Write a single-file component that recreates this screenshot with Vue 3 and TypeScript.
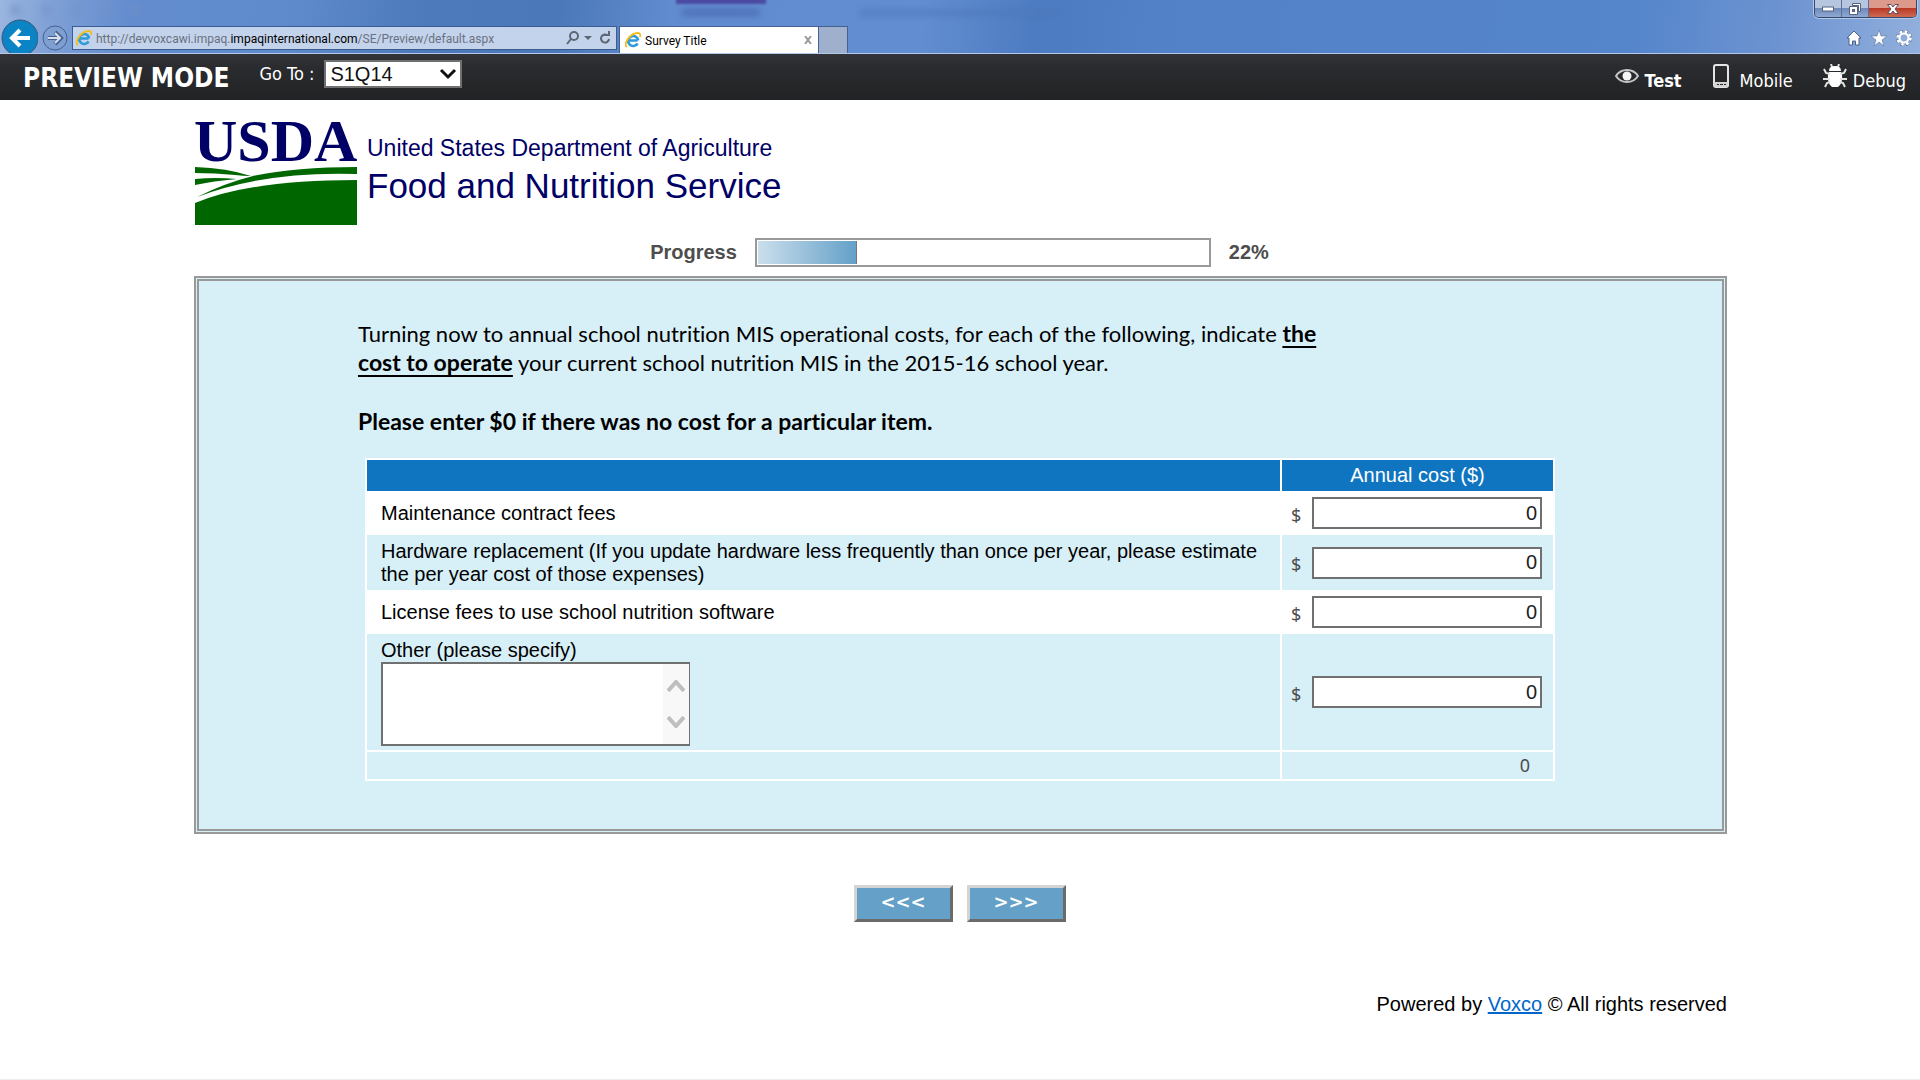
<script setup lang="ts">
import { reactive, ref, computed } from 'vue'

interface CostRow {
  id: string
  label: string
  value: string
  specify?: boolean
}

const rows = reactive<CostRow[]>([
  { id: 'maintenance', label: 'Maintenance contract fees', value: '0' },
  {
    id: 'hardware',
    label:
      'Hardware replacement (If you update hardware less frequently than once per year, please estimate the per year cost of those expenses)',
    value: '0',
  },
  { id: 'license', label: 'License fees to use school nutrition software', value: '0' },
  { id: 'other', label: 'Other (please specify)', value: '0', specify: true },
])

const otherText = ref('')
const question = ref('S1Q14')
const progress = ref(22)

const total = computed(() => rows.reduce((sum, row) => sum + (Number(row.value) || 0), 0))
</script>

<template>
  <div class="window">
    <header class="chrome">
      <div class="glass" aria-hidden="true">
        <i class="ghost ghost-block"></i>
        <i class="ghost ghost-caption"></i>
        <i class="ghost ghost-title"></i>
        <i class="ghost ghost-tools"></i>
      </div>
      <div class="window-buttons">
        <button type="button" class="win" aria-label="Minimize">
          <svg width="14" height="8" viewBox="0 0 14 8"><rect x="1.500" y="2" width="11" height="4" fill="#fff" stroke="#56637f" /></svg>
        </button>
        <button type="button" class="win" aria-label="Restore">
          <svg width="14" height="14" viewBox="0 0 14 14">
            <path d="M4.500 1.500h8v8h-2v-6h-6z" fill="#fff" stroke="#56637f" />
            <path d="M1.500 4.500h8v8h-8z" fill="#fff" stroke="#56637f" />
            <rect x="4.500" y="7.500" width="2" height="2" fill="#6d86b4" stroke="#56637f" />
          </svg>
        </button>
        <button type="button" class="win win-close" aria-label="Close">
          <svg width="14" height="12" viewBox="0 0 14 12">
            <path d="M1.500 1.500h3.500l2 2.500 2-2.500h3.500l-3.500 4.500 3.500 4.500h-3.500l-2-2.500-2 2.500h-3.500l3.500-4.500z" fill="#fff" stroke="#5f4d5c" />
          </svg>
        </button>
      </div>
      <div class="nav">
        <button type="button" class="nav-back" aria-label="Back">
          <svg width="38" height="36" viewBox="0 0 38 36">
            <circle cx="20" cy="19" r="18" fill="#0a84c4" stroke="#3c5578" />
            <path d="M30 19H13M20 11l-8 8 8 8" fill="none" stroke="#fff" stroke-width="4" />
          </svg>
        </button>
        <button type="button" class="nav-forward" aria-label="Forward">
          <svg width="26" height="26" viewBox="0 0 26 26">
            <circle cx="13" cy="13" r="12" fill="#7f9fd2" stroke="#46618f" />
            <path d="M6 13h13M13 7l6 6-6 6" fill="none" stroke="#46618f" stroke-width="4" />
            <path d="M6 13h12M13 8l5 5-5 5" fill="none" stroke="#d5dff0" stroke-width="2" />
          </svg>
        </button>
        <div class="address">
          <svg class="ie" width="16" height="16" viewBox="0 0 16 16">
            <path d="M12.500 8.500H4M12.600 11.500A5 5 0 1 1 13.200 8.500" fill="none" stroke="#2f9ad8" stroke-width="2.600" />
            <path d="M2 15C-2 12 5 1 13 1c2.500 0 2.500 2 2 4" fill="none" stroke="#f2bd1c" stroke-width="1.800" />
          </svg>
          <span class="url">http://devvoxcawi.impaq.<b>impaqinternational.com</b>/SE/Preview/default.aspx</span>
          <svg width="46" height="16" viewBox="0 0 46 16" fill="none" stroke="#5d6672">
            <circle cx="8" cy="6" r="4" stroke-width="2" />
            <path d="M5 9l-4 5" stroke-width="2" />
            <path d="M18 6h8l-4 4z" fill="#5d6672" stroke="none" />
            <path d="M41 5A4 4 0 1 0 43 9" stroke-width="2" />
            <path d="M38 5h5V1" stroke-width="2" />
          </svg>
        </div>
        <div class="tab">
          <svg class="ie" width="16" height="16" viewBox="0 0 16 16">
            <path d="M12.500 8.500H4M12.600 11.500A5 5 0 1 1 13.200 8.500" fill="none" stroke="#2f9ad8" stroke-width="2.600" />
            <path d="M2 15C-2 12 5 1 13 1c2.500 0 2.500 2 2 4" fill="none" stroke="#f2bd1c" stroke-width="1.800" />
          </svg>
          <span class="tab-title">Survey Title</span>
          <button type="button" class="tab-close" aria-label="Close tab">
            <svg width="8" height="8" viewBox="0 0 8 8"><path d="M1 0l6 8M7 0L1 8" stroke="#9a9a9a" stroke-width="2" /></svg>
          </button>
        </div>
        <button type="button" class="new-tab" aria-label="New tab"></button>
        <div class="tools">
          <svg width="16" height="16" viewBox="0 0 16 16">
            <path d="M8 1l7 7h-2v7H9.500v-4h-3v4H3V8H1z" fill="#fff" stroke="#4a6189" />
          </svg>
          <svg width="16" height="16" viewBox="0 0 16 16">
            <path d="M8 0l2 6h6l-5 4 2 6-5-4-5 4 2-6-5-4h6z" fill="#fff" stroke="#4a6189" stroke-width=".5" />
          </svg>
          <svg width="16" height="16" viewBox="0 0 16 16" fill="none">
            <circle cx="8" cy="8" r="6.500" stroke="#4a6189" stroke-width="3.400" stroke-dasharray="3.100 2" />
            <circle cx="8" cy="8" r="6.500" stroke="#fff" stroke-width="2.600" stroke-dasharray="2.600 2.500" />
            <circle cx="8" cy="8" r="4.500" stroke="#fff" stroke-width="2.200" />
          </svg>
        </div>
      </div>
    </header>

    <div class="preview-bar">
      <strong class="mode">PREVIEW MODE</strong>
      <label class="goto-label" for="goto">Go To :</label>
      <div class="select-wrap">
        <select id="goto" v-model="question" class="goto">
          <option>S1Q14</option>
        </select>
        <svg class="chevron" width="18" height="12" viewBox="0 0 18 12"><path d="M2 2l7 7 7-7" fill="none" stroke="#111" stroke-width="3" /></svg>
      </div>
      <div class="views">
        <button type="button" class="view view-active">
          <svg width="24" height="24" viewBox="0 0 24 24">
            <path d="M1 12C6 4 18 4 23 12C18 20 6 20 1 12z" fill="none" stroke="#c4c5c7" stroke-width="2" />
            <circle cx="12" cy="12" r="4.500" fill="#f4f4f4" />
          </svg>
          <span>Test</span>
        </button>
        <button type="button" class="view">
          <svg width="22" height="24" viewBox="-1 0 22 24">
            <rect x="1" y="1" width="14" height="22" rx="2" fill="none" stroke="#e4e4e4" stroke-width="2" />
            <path d="M1 18h14v3l-1 2H2l-1-2z" fill="#d4d4d4" />
            <path d="M4 20.500h2M7 20.500h3M11 20.500h2" stroke="#28292b" />
          </svg>
          <span>Mobile</span>
        </button>
        <button type="button" class="view">
          <svg width="24" height="24" viewBox="0 0 24 24" stroke="#e2e2e2">
            <path d="M8 0l1 3M16 0l-1 3" fill="none" stroke-width="2" />
            <path d="M6 7q0-5 6-5t6 5z" fill="#fff" stroke="none" />
            <path d="M6 8h12l1 3q1 8-4 12h-6q-5-4-4-12z" fill="#fff" stroke="none" />
            <path d="M1 5l2 4 4 1M0 15h7M2 23l2-4 3-1M23 5l-2 4-4 1M24 15h-7M22 23l-2-4-3-1" fill="none" stroke-width="2" />
          </svg>
          <span>Debug</span>
        </button>
      </div>
    </div>

    <main class="page">
      <div class="logo">
        <div class="logo-mark">
          <span class="usda">USDA</span>
          <svg class="fields" width="162" height="58" viewBox="0 0 162 58" fill="#060">
            <path d="M0 0Q32 1 56 9Q48 9 40 8Q20 6 0 6z" />
            <path d="M0 12Q20 10 42 12Q18 14 0 18z" />
            <path d="M2 30Q30 16 58 9Q100 0 162 0V7Q70 4 2 30z" />
            <path d="M0 36Q55 13 162 13V58H0z" />
          </svg>
        </div>
        <div class="logo-text">
          <span class="dept">United States Department of Agriculture</span>
          <span class="service">Food and Nutrition Service</span>
        </div>
      </div>

      <div class="progress">
        <span id="progress-label">Progress</span>
        <div class="bar" role="progressbar" aria-labelledby="progress-label" :aria-valuenow="progress">
          <div class="bar-fill" :style="{ width: progress + '%' }"></div>
        </div>
        <span>{{ progress }}%</span>
      </div>

      <form class="panel" @submit.prevent>
        <div class="intro">
          <p>
            Turning now to annual school nutrition MIS operational costs, for each of the following, indicate
            <b><u>the</u></b> <b><u>cost to operate</u></b> your current school nutrition MIS in the 2015-16 school year.
          </p>
          <p><b>Please enter $0 if there was no cost for a particular item.</b></p>
        </div>

        <table class="costs">
          <colgroup>
            <col />
            <col class="cost-col" />
          </colgroup>
          <thead>
            <tr>
              <th></th>
              <th scope="col">Annual cost ($)</th>
            </tr>
          </thead>
          <tbody>
            <tr v-for="row in rows" :key="row.id">
              <td class="item">
                <label :for="row.id">{{ row.label }}</label>
                <div v-if="row.specify" class="specify">
                  <textarea v-model="otherText" aria-label="Other (please specify)"></textarea>
                  <div class="scroll" aria-hidden="true">
                    <svg width="18" height="14" viewBox="0 0 18 14"><path d="M1 11l8-9 8 9" fill="none" stroke="#bfbfbf" stroke-width="4" /></svg>
                    <svg width="18" height="14" viewBox="0 0 18 14"><path d="M1 3l8 9 8-9" fill="none" stroke="#bfbfbf" stroke-width="4" /></svg>
                  </div>
                </div>
              </td>
              <td class="cost">
                <div class="money">
                  <span>$</span>
                  <input :id="row.id" v-model="row.value" type="text" />
                </div>
              </td>
            </tr>
          </tbody>
          <tfoot>
            <tr>
              <td></td>
              <td class="total">{{ total }}</td>
            </tr>
          </tfoot>
        </table>
      </form>

      <div class="pager">
        <button type="button">&lt;&lt;&lt;</button>
        <button type="button">&gt;&gt;&gt;</button>
      </div>

      <footer class="footer">Powered by <a href="#">Voxco</a> © All rights reserved</footer>
    </main>
  </div>
</template>

<style>
body {
  margin: 0;
  background: #fff;
}
</style>

<style scoped>
.window {
  box-sizing: border-box;
  min-height: 100vh;
  border-bottom: 1px solid #ececec;
  font-family: "Liberation Sans", Arial, sans-serif;
  font-size: 20px;
  line-height: 23px;
  color: #000;
}

button {
  font: inherit;
  color: inherit;
  background: none;
  border: 0;
  padding: 0;
}

svg {
  display: block;
  flex: none;
}

/* Browser frame */
.chrome {
  position: relative;
  box-sizing: border-box;
  height: 54px;
  padding-top: 18px;
  overflow: hidden;
  border-bottom: 1px solid #b4c8ea;
  background: linear-gradient(97deg, #9bb6df 0%, #7d9fd5 3%, #628cce 7%, #5f8bcd 15%, #4d7abb 22%, #4b78b9 29%, #618ccf 35%, #628dd0 48%, #4d7bc1 54%, #5381c8 60%, #5585cb 85%, #6e94d1 93%, #92b0dd 100%);
}

.glass {
  position: absolute;
  inset: 0;
}

.ghost {
  position: absolute;
  filter: blur(3px);
}

.ghost-block {
  left: 676px;
  top: -4px;
  width: 90px;
  height: 8px;
  background: #4d4aa4;
  filter: blur(1px);
}

.ghost-caption {
  left: 682px;
  top: 9px;
  width: 78px;
  height: 7px;
  background: #4f6fb9;
}

.ghost-title {
  left: 860px;
  top: 10px;
  width: 200px;
  height: 6px;
  background: #4b76b8;
  opacity: 0.6;
}

.ghost-tools {
  left: 10px;
  top: 4px;
  width: 130px;
  height: 12px;
  background: repeating-linear-gradient(90deg, #7590c8 0 12px, transparent 12px 30px);
  opacity: 0.5;
}

.window-buttons {
  position: absolute;
  top: 0;
  right: 3px;
  display: flex;
  box-sizing: border-box;
  height: 18px;
  border: 1px solid #34496f;
  border-top: 0;
  border-radius: 0 0 5px 5px;
  overflow: hidden;
  box-shadow: 0 0 0 1px #b7c8e6;
}

.win {
  display: flex;
  align-items: center;
  justify-content: center;
  width: 27px;
  background: linear-gradient(#b7c6df 45%, #6f8bbb 50%, #90a9d2);
  border-right: 1px solid #5a6f98;
}

.win-close {
  width: 47px;
  border-right: 0;
  background: linear-gradient(#dc9a8c 45%, #b93a26 50%, #cf6a50);
}

.nav {
  position: relative;
  display: flex;
  align-items: flex-start;
}

.nav-back {
  margin-top: 1px;
}

.nav-forward {
  margin: 7px 4px 0 4px;
}

.address {
  display: flex;
  align-items: center;
  gap: 4px;
  box-sizing: border-box;
  width: 545px;
  height: 24px;
  margin-top: 8px;
  padding: 0 4px 0 3px;
  border: 1px solid #3d5c94;
  background: #c4d3ec;
}

.url {
  flex: 1;
  padding-top: 2px;
  font: 12px/20px Roboto, sans-serif;
  color: #68717f;
  white-space: nowrap;
}

.url b {
  font-weight: 400;
  color: #000;
}

.tab {
  display: flex;
  align-items: center;
  gap: 4px;
  box-sizing: border-box;
  width: 200px;
  height: 27px;
  margin: 8px 0 0 2px;
  padding: 0 6px 0 5px;
  border: 1px solid #46618f;
  border-bottom: 0;
  background: #fff;
}

.tab-title {
  flex: 1;
  padding-top: 2px;
  font: 12px/24px Roboto, sans-serif;
}

.new-tab {
  box-sizing: border-box;
  width: 29px;
  height: 27px;
  margin-top: 8px;
  background: #9eb0cc;
  border: 1px solid #46618f;
  border-width: 1px 1px 0 0;
}

.tools {
  display: flex;
  gap: 9px;
  margin: 12px 8px 0 auto;
}

/* Preview toolbar */
.preview-bar {
  display: flex;
  align-items: flex-start;
  box-sizing: border-box;
  height: 46px;
  padding: 6px 14px 0 23px;
  background: linear-gradient(#323439, #2a2b2e 30%, #222325);
  color: #fff;
  font-family: "DejaVu Sans Condensed", "DejaVu Sans", sans-serif;
}

.mode {
  font-size: 26px;
  line-height: 36px;
}

.goto-label {
  margin: 2px 10px 0 30px;
  font-size: 18px;
  line-height: 24px;
}

.select-wrap {
  position: relative;
}

.goto {
  display: block;
  box-sizing: border-box;
  width: 138px;
  height: 28px;
  padding: 0 4px;
  border: 2px solid #707070;
  border-radius: 0;
  background: #fff;
  appearance: none;
  font: 20px/24px "Liberation Sans", sans-serif;
  color: #111;
}

.chevron {
  position: absolute;
  top: 8px;
  right: 5px;
  pointer-events: none;
}

.views {
  display: flex;
  gap: 30px;
  margin: 4px 0 0 auto;
}

.view {
  display: flex;
  gap: 6px;
  font-size: 18px;
  line-height: 34px;
}

.view-active {
  font-weight: 700;
}

/* Survey page */
.page {
  padding: 12px 193px 0 194px;
}

.logo {
  display: flex;
  gap: 10px;
}

.logo-mark {
  width: 163px;
}

.usda {
  display: block;
  height: 55px;
  font: 700 60px/58px "Liberation Serif", serif;
  color: #006;
}

.fields {
  margin-left: 1px;
}

.logo-text {
  display: flex;
  flex-direction: column;
  padding-top: 22px;
  color: #006;
}

.dept {
  font-size: 23px;
  line-height: 28px;
}

.service {
  font-size: 35px;
  line-height: 48px;
}

.progress {
  display: flex;
  align-items: center;
  justify-content: center;
  gap: 18px;
  margin-top: 13px;
  padding-right: 2px;
  font-weight: 700;
  color: #4d4d4d;
}

.bar {
  box-sizing: border-box;
  width: 456px;
  height: 29px;
  padding: 1px;
  border: 2px solid #999;
}

.bar-fill {
  box-sizing: border-box;
  height: 100%;
  border-right: 1px solid #777;
  background: linear-gradient(90deg, #cbdfec, #64a0c8);
}

.panel {
  box-sizing: border-box;
  margin-top: 9px;
  padding: 38px 167px 48px 159px;
  border: 5px double #999;
  background: #d7eff7;
}

.intro {
  max-width: 985px;
  font: 22px/29px Lato, sans-serif;
  font-variant-ligatures: none;
}

.intro p {
  margin: 0 0 30px;
}

.intro p:last-child {
  margin-bottom: 22px;
}

.intro b {
  font-size: 23px;
  line-height: 24px;
}

.intro u {
  text-decoration-thickness: 2px;
  text-underline-offset: 4px;
  text-decoration-skip-ink: none;
}

.costs {
  width: calc(100% - 7px);
  margin-left: 7px;
  border-collapse: collapse;
  table-layout: fixed;
}

.cost-col {
  width: 273px;
}

.costs th,
.costs td {
  box-sizing: border-box;
  padding: 5px 14px 4px;
  border: 2px solid #fff;
}

.costs th {
  height: 33px;
  padding: 4px 14px;
  background: #0f75c1;
  color: #fff;
  font-weight: 400;
}

.costs tbody tr:nth-child(odd) {
  background: #fff;
}

.costs .cost {
  padding: 4px 11px 4px 9px;
}

.item label {
  display: block;
}

.money {
  display: flex;
  align-items: center;
  justify-content: space-between;
}

.money span {
  padding-top: 3px;
  font: 18px/24px "Noto Sans", sans-serif;
  color: #4d4d4d;
}

.money input {
  box-sizing: border-box;
  width: 230px;
  height: 32px;
  padding: 0 3px;
  border: 2px solid #707070;
  font: inherit;
  text-align: right;
  color: #222;
}

.specify {
  display: flex;
  box-sizing: border-box;
  width: 309px;
  height: 84px;
  border: 2px solid #707070;
  border-right-width: 1px;
  background: #fff;
}

.specify textarea {
  flex: 1;
  min-width: 0;
  padding: 2px;
  border: 0;
  resize: none;
  overflow: hidden;
  font: inherit;
}

.scroll {
  display: flex;
  flex-direction: column;
  align-items: center;
  justify-content: center;
  gap: 20px;
  width: 26px;
  background: #f8f8f8;
}

.costs .total {
  height: 29px;
  padding: 0 23px;
  font: 18px/27px "Noto Sans", sans-serif;
  text-align: right;
  color: #4d4d4d;
}

.pager {
  display: flex;
  justify-content: center;
  gap: 14px;
  margin-top: 51px;
  padding-right: 2px;
}

.pager button {
  box-sizing: border-box;
  width: 99px;
  height: 37px;
  padding-bottom: 3px;
  border: 3px solid;
  border-color: #d4d4d4 #6a6a6a #6a6a6a #d4d4d4;
  background: #64a0c8;
  color: #fff;
  font: 700 18px/24px "DejaVu Sans", sans-serif;
}

.footer {
  margin-top: 71px;
  text-align: right;
}

.footer a {
  color: #06c;
  text-decoration-thickness: 2px;
}
</style>
